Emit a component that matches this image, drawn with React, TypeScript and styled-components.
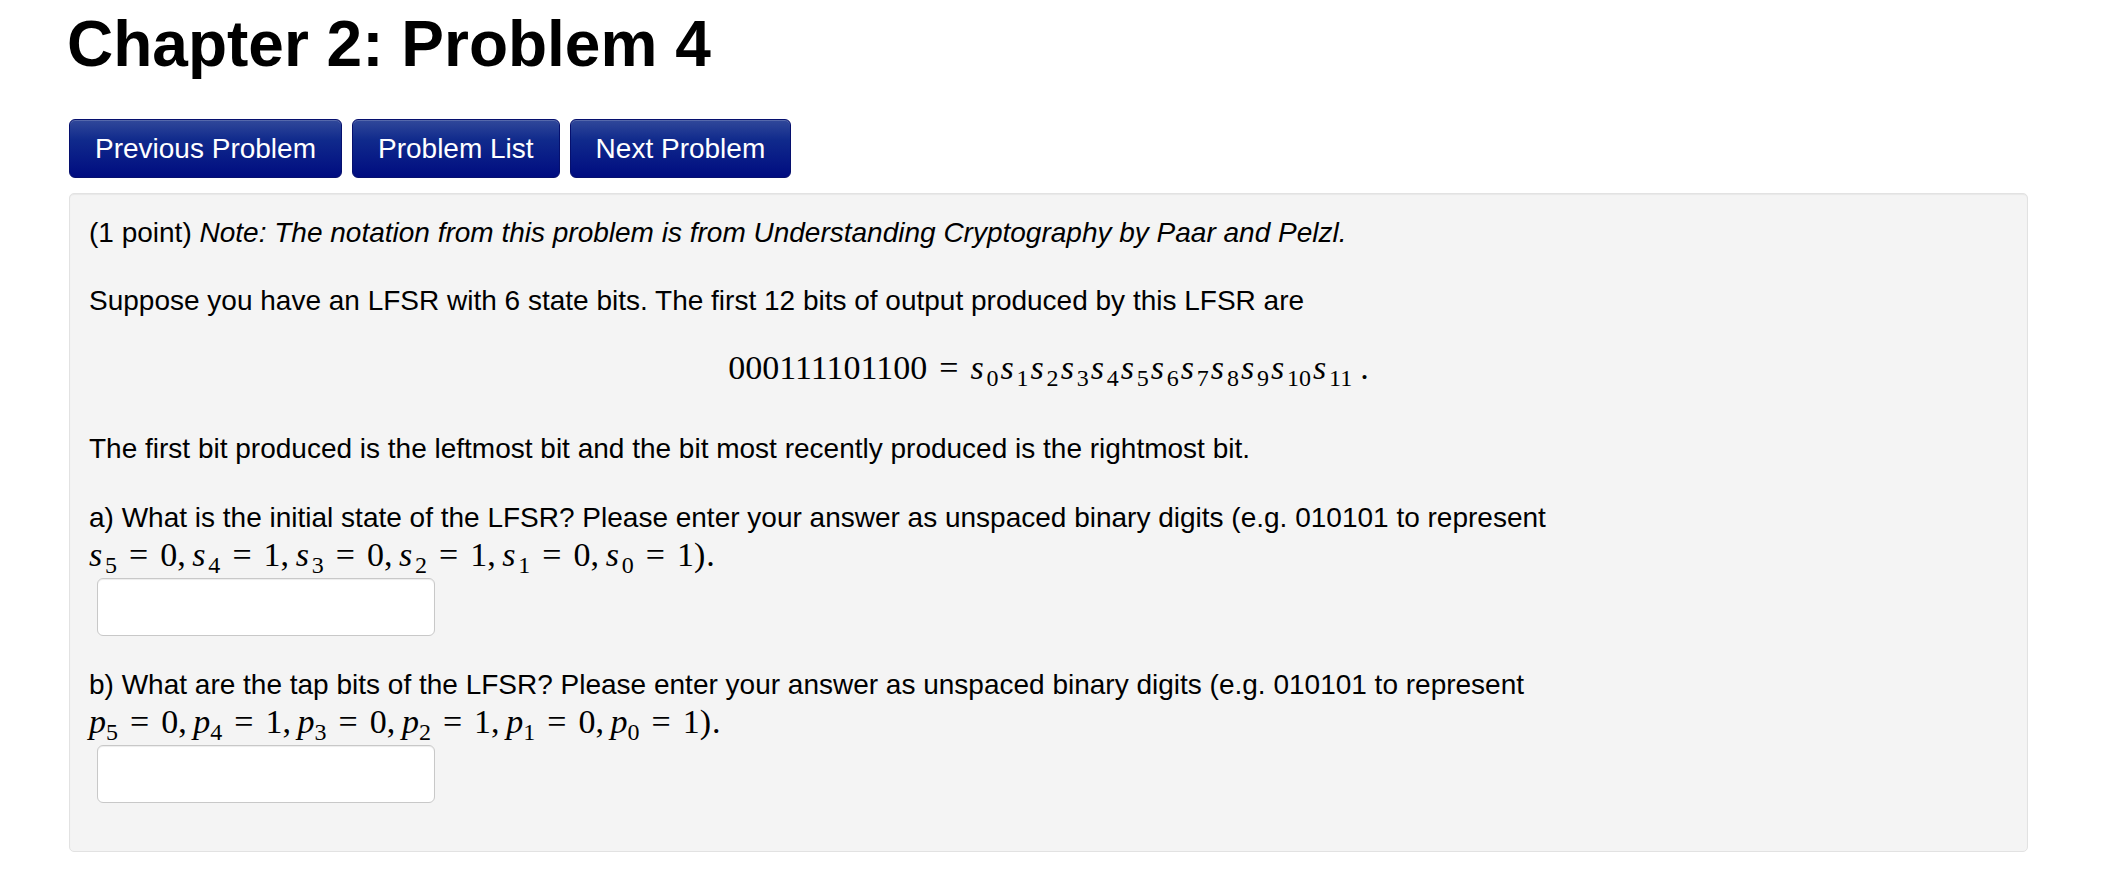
import React from "react";
import styled, { createGlobalStyle } from "styled-components";

const Global = createGlobalStyle`
  html, body { margin: 0; padding: 0; background: #fff; }
  body { font-family: "Liberation Sans", Arial, sans-serif; color: #000; }
`;

const Page = styled.div`
  padding: 0 81px 0 69px;
`;

const Title = styled.h1`
  margin: 10px 0 0 -2px;
  font-size: 64px;
  line-height: 69px;
  font-weight: bold;
`;

const NavBar = styled.div`
  display: flex;
  gap: 10px;
  margin-top: 40px;
`;

const NavButton = styled.button`
  font-family: "Liberation Sans", Arial, sans-serif;
  font-size: 28px;
  line-height: 39px;
  color: #fff;
  padding: 9px 25px;
  border: 1px solid #06106e;
  border-radius: 6px;
  background: linear-gradient(to bottom, #31489a 0%, #102a8c 35%, #000c80 100%);
  box-shadow: inset 0 1px 0 rgba(255, 255, 255, 0.18);
  cursor: pointer;
`;

const Well = styled.div`
  margin-top: 15px;
  background: #f4f4f4;
  border: 1px solid #e2e2e2;
  border-radius: 5px;
  box-shadow: inset 0 1px 1px rgba(0, 0, 0, 0.05);
  padding: 19px;
  font-size: 28px;
  line-height: 39.2px;
`;

const Para = styled.p`
  margin: 0 0 29px;
`;

const Em = styled.em`
  font-style: italic;
`;

const DisplayMath = styled.div`
  margin: 30px 0 44px;
  text-align: center;
  white-space: nowrap;
  font-size: 34px;
  line-height: 34px;
`;

const MathLine = styled.span`
  display: inline-block;
  white-space: nowrap;
  font-family: "Liberation Serif", "Times New Roman", serif;
  font-size: 34px;
  line-height: 34px;
`;

const Var = styled.span<{ $pad?: number }>`
  font-style: italic;
  margin-right: ${(p) => p.$pad ?? 0}px;
`;

const Sub = styled.sub`
  font-size: 0.707em;
  vertical-align: -0.3em;
  line-height: 0;
`;

const Rel = styled.span`
  margin: 0 12px;
`;

const Comma = styled.span`
  margin-right: 6.6px;
`;

const Term = styled.span<{ $gap?: number }>`
  margin-right: ${(p) => p.$gap ?? 0}px;
`;

const Dot = styled.span`
  margin-left: 8px;
`;

const Paren = styled.span`
  margin-right: 1px;
`;

const AnswerInput = styled.input`
  display: block;
  box-sizing: border-box;
  width: 338px;
  height: 58px;
  margin: 2px 0 0 8px;
  background: #fff;
  border: 1px solid #c8c8c8;
  border-radius: 6px;
  box-shadow: inset 0 1px 1px rgba(0, 0, 0, 0.075);
  font-size: 28px;
  padding: 0 10px;
`;

const sym = (v: string, k: string, gap = 0) => (
  <Term key={v + k} $gap={gap}>
    <Var $pad={v === "s" ? 2.8 : 0}>{v}</Var>
    <Sub>{k}</Sub>
  </Term>
);

const Assign: React.FC<{ v: string }> = ({ v }) => {
  const items: [string, string][] = [
    ["5", "0"],
    ["4", "1"],
    ["3", "0"],
    ["2", "1"],
    ["1", "0"],
    ["0", "1"],
  ];
  return (
    <MathLine>
      {items.map(([k, val], i) => (
        <React.Fragment key={k}>
          {sym(v, k)}
          <Rel>=</Rel>
          {val}
          {i < items.length - 1 ? <Comma>,</Comma> : null}
        </React.Fragment>
      ))}
      <Paren>)</Paren>.
    </MathLine>
  );
};

export default function App() {
  const idx = ["0", "1", "2", "3", "4", "5", "6", "7", "8", "9", "10", "11"];
  return (
    <>
      <Global />
      <Page>
        <Title>Chapter 2: Problem 4</Title>
        <NavBar>
          <NavButton>Previous Problem</NavButton>
          <NavButton>Problem List</NavButton>
          <NavButton>Next Problem</NavButton>
        </NavBar>
        <Well>
          <Para>
            (1 point){" "}
            <Em>
              Note: The notation from this problem is from Understanding Cryptography by Paar and
              Pelzl.
            </Em>
          </Para>
          <Para>
            Suppose you have an LFSR with 6 state bits. The first 12 bits of output produced by
            this LFSR are
          </Para>
          <DisplayMath>
            <MathLine>
              000111101100
              <Rel>=</Rel>
              {idx.map((k, i) => sym("s", k, i < idx.length - 1 ? 2 : 0))}
              <Dot>.</Dot>
            </MathLine>
          </DisplayMath>
          <Para>
            The first bit produced is the leftmost bit and the bit most recently produced is the
            rightmost bit.
          </Para>
          <Para>
            a) What is the initial state of the LFSR? Please enter your answer as unspaced binary
            digits (e.g. 010101 to represent <Assign v="s" />
            <AnswerInput type="text" aria-label="answer a" />
          </Para>
          <Para>
            b) What are the tap bits of the LFSR? Please enter your answer as unspaced binary digits
            (e.g. 010101 to represent <Assign v="p" />
            <AnswerInput type="text" aria-label="answer b" />
          </Para>
        </Well>
      </Page>
    </>
  );
}
